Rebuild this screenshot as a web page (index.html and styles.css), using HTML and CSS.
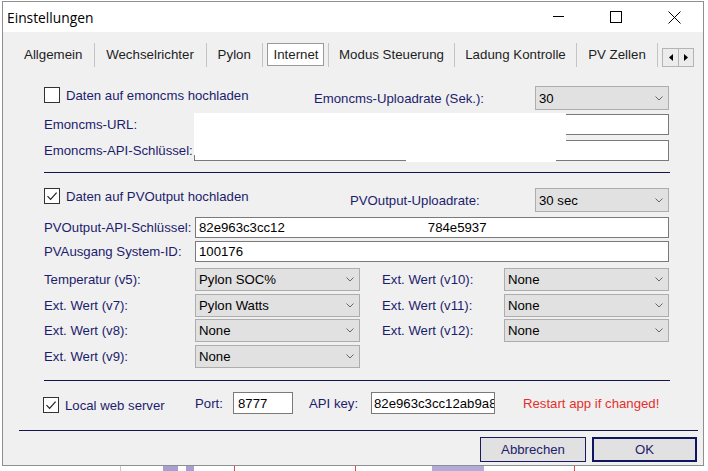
FILE: index.html
```html
<!DOCTYPE html>
<html lang="de">
<head>
<meta charset="utf-8">
<title>Einstellungen</title>
<link rel="stylesheet" href="styles.css">
</head>
<body>
<div class="dialog">
  <div class="titlebar">
    <span class="title">Einstellungen</span>
    <div class="controls">
      <span class="ctl ctl-min"><svg width="11" height="1" viewBox="0 0 11 1"><rect width="11" height="1" fill="#000"/></svg></span>
      <span class="ctl"><svg width="12" height="12" viewBox="0 0 12 12"><rect x="0.5" y="0.5" width="11" height="11" fill="none" stroke="#000"/></svg></span>
      <span class="ctl"><svg width="13" height="13" viewBox="0 0 13 13"><path d="M0.5 0.5L12.5 12.5M12.5 0.5L0.5 12.5" stroke="#000" stroke-width="1"/></svg></span>
    </div>
  </div>

  <div class="client">
    <div class="tabs">
      <span class="tab t1">Allgemein</span><i class="sep"></i>
      <span class="tab t2">Wechselrichter</span><i class="sep"></i>
      <span class="tab t3">Pylon</span><i class="sep"></i>
      <span class="tab t4 active"><span class="tabbox">Internet</span></span><i class="sep"></i>
      <span class="tab t5">Modus Steuerung</span><i class="sep"></i>
      <span class="tab t6">Ladung Kontrolle</span><i class="sep"></i>
      <span class="tab t7">PV Zellen</span><i class="sep"></i>
      <span class="scroller">
        <span class="arr"><svg width="4" height="7" viewBox="0 0 4 7"><path d="M4 0L0 3.5L4 7Z" fill="#000"/></svg></span>
        <span class="arr"><svg width="4" height="7" viewBox="0 0 4 7"><path d="M0 0L4 3.5L0 7Z" fill="#000"/></svg></span>
      </span>
    </div>

    <div class="page">
      <div class="sec1">
        <div class="row row-a">
          <label class="chkgrp w-a"><span class="chk"></span><span>Daten auf emoncms hochladen</span></label>
          <span class="lbl grow">Emoncms-Uploadrate (Sek.):</span>
          <div class="sel w-rate"><span>30</span><svg width="8" height="5" viewBox="0 0 8 5"><path d="M0.5 0.5L4 4L7.5 0.5" fill="none" stroke="#666"/></svg></div>
        </div>
        <div class="row row-b">
          <span class="lbl w-l1">Emoncms-URL:</span>
          <div class="field grow"></div>
        </div>
        <div class="row row-c">
          <span class="lbl w-l1">Emoncms-API-Schlüssel:</span>
          <div class="field grow"></div>
        </div>
        <div class="redact redact-a"></div>
        <div class="redact redact-b"></div>
      </div>

      <div class="rule"></div>

      <div class="row row-d">
        <label class="chkgrp w-d"><span class="chk on"><svg width="14" height="14" viewBox="0 0 14 14"><path d="M2.5 7.2L5.6 10.3L11.6 3.6" fill="none" stroke="#222" stroke-width="1.2"/></svg></span><span>Daten auf PVOutput hochladen</span></label>
        <span class="lbl grow">PVOutput-Uploadrate:</span>
        <div class="sel w-rate"><span>30 sec</span><svg width="8" height="5" viewBox="0 0 8 5"><path d="M0.5 0.5L4 4L7.5 0.5" fill="none" stroke="#666"/></svg></div>
      </div>
      <div class="row row-e">
        <span class="lbl w-l2">PVOutput-API-Schlüssel:</span>
        <div class="field grow"><span>82e963c3cc12</span><span class="key-tail">784e5937</span></div>
      </div>
      <div class="row row-f">
        <span class="lbl w-l2">PVAusgang System-ID:</span>
        <div class="field grow"><span>100176</span></div>
      </div>

      <div class="grid">
        <span class="lbl">Temperatur (v5):</span>
        <div class="sel"><span>Pylon SOC%</span><svg width="8" height="5" viewBox="0 0 8 5"><path d="M0.5 0.5L4 4L7.5 0.5" fill="none" stroke="#666"/></svg></div>
        <span></span>
        <span class="lbl">Ext. Wert (v10):</span>
        <div class="sel"><span>None</span><svg width="8" height="5" viewBox="0 0 8 5"><path d="M0.5 0.5L4 4L7.5 0.5" fill="none" stroke="#666"/></svg></div>

        <span class="lbl">Ext. Wert (v7):</span>
        <div class="sel"><span>Pylon Watts</span><svg width="8" height="5" viewBox="0 0 8 5"><path d="M0.5 0.5L4 4L7.5 0.5" fill="none" stroke="#666"/></svg></div>
        <span></span>
        <span class="lbl">Ext. Wert (v11):</span>
        <div class="sel"><span>None</span><svg width="8" height="5" viewBox="0 0 8 5"><path d="M0.5 0.5L4 4L7.5 0.5" fill="none" stroke="#666"/></svg></div>

        <span class="lbl">Ext. Wert (v8):</span>
        <div class="sel"><span>None</span><svg width="8" height="5" viewBox="0 0 8 5"><path d="M0.5 0.5L4 4L7.5 0.5" fill="none" stroke="#666"/></svg></div>
        <span></span>
        <span class="lbl">Ext. Wert (v12):</span>
        <div class="sel"><span>None</span><svg width="8" height="5" viewBox="0 0 8 5"><path d="M0.5 0.5L4 4L7.5 0.5" fill="none" stroke="#666"/></svg></div>

        <span class="lbl">Ext. Wert (v9):</span>
        <div class="sel"><span>None</span><svg width="8" height="5" viewBox="0 0 8 5"><path d="M0.5 0.5L4 4L7.5 0.5" fill="none" stroke="#666"/></svg></div>
      </div>

      <div class="rule rule-2"></div>

      <div class="row row-k">
        <label class="chkgrp w-k"><span class="chk on"><svg width="14" height="14" viewBox="0 0 14 14"><path d="M2.5 7.2L5.6 10.3L11.6 3.6" fill="none" stroke="#222" stroke-width="1.2"/></svg></span><span>Local web server</span></label>
        <span class="lbl w-port">Port:</span>
        <div class="field w-portin"><span>8777</span></div>
        <span class="lbl w-apik">API key:</span>
        <div class="field w-apiin"><span>82e963c3cc12ab9a8</span></div>
        <span class="warn">Restart app if changed!</span>
      </div>
    </div>

    <div class="rule rule-wide"></div>

    <div class="buttons">
      <button class="btn w-cancel">Abbrechen</button>
      <button class="btn btn-default w-ok">OK</button>
    </div>
  </div>
</div>
</body>
</html>
```

FILE: styles.css
```css
* { box-sizing: border-box; }

html, body { margin: 0; padding: 0; }

body {
  width: 708px;
  height: 471px;
  overflow: hidden;
  background-color: #ffffff;
  background-image:
    linear-gradient(to right, transparent 0 120px, #c8c8c8 120px 121px, transparent 121px 163px, #a89ed2 163px 178px, transparent 178px 186px, #a89ed2 186px 194px, transparent 194px 234px, #e04848 234px 235px, transparent 235px 355px, #e04848 355px 356px, transparent 356px 432px, #b3a9da 432px 484px, transparent 484px 574px, #e04848 574px 575px, transparent 575px);
  background-repeat: no-repeat;
  background-position: 0 466px;
  background-size: 708px 5px;
  font-family: "Liberation Sans", Arial, sans-serif;
  font-size: 13.2px;
  color: #1c1c6c;
}

.dialog {
  margin: 1px 0 0 2px;
  width: 702px;
  height: 465px;
  border: 1px solid #8f8f8f;
  background: #f0f0f0;
  display: flex;
  flex-direction: column;
}

/* title bar */
.titlebar {
  flex: none;
  height: 30px;
  background: #ffffff;
  display: flex;
  align-items: center;
}
.title {
  flex: 1;
  padding-left: 4px;
  font-family: "Open Sans", "Noto Sans", sans-serif;
  font-size: 13.8px;
  color: #000;
}
.controls { display: flex; height: 100%; }
.ctl {
  width: 58px;
  display: flex;
  align-items: center;
  justify-content: center;
}
.ctl svg { display: block; }
.ctl-min { padding-bottom: 2px; }

/* client */
.client { flex: 1; display: flex; flex-direction: column; }

.tabs {
  display: flex;
  align-items: flex-start;
  height: 24px;
  margin-top: 11px;
  padding-left: 10px;
  color: #1e1e1e;
  font-size: 13.3px;
}
.tab {
  height: 24px;
  line-height: 24px;
  text-align: center;
  white-space: nowrap;
}
.t1 { width: 80.5px; }
.t2 { width: 111px; }
.t3 { width: 55.5px; }
.t4 { width: 65px; }
.t5 { width: 125px; }
.t6 { width: 121px; }
.t7 { width: 80px; }
.tab.active { display: flex; justify-content: center; }
.tabbox {
  display: block;
  height: 23px;
  line-height: 22px;
  padding: 0 4px 0 5px;
  border: 1px solid #9a9a9a;
  background: #ffffff;
}
.sep {
  width: 1px;
  height: 24px;
  background: #c4c4c4;
}
.scroller {
  display: flex;
  margin: 5px 0 0 4px;
  height: 19px;
  border: 1px solid #b4b4b4;
}
.arr {
  width: 15px;
  display: flex;
  align-items: center;
  justify-content: center;
  background: #ececec;
}
.arr + .arr { border-left: 1px solid #b4b4b4; }
.arr svg { display: block; }

/* page */
.page {
  margin: 19px 0 0 41px;
  width: 625px;
}
.sec1 { position: relative; }

.row { display: flex; align-items: center; }
.grow { flex: 1; }
.lbl { white-space: nowrap; }

.row-a { height: 24px; }
.row-b { height: 21px; margin-top: 4px; }
.row-c { height: 21px; margin-top: 5px; }
.row-d { height: 24px; margin-top: 15px; }
.row-e { height: 21px; margin-top: 5px; }
.row-f { height: 21px; margin-top: 3px; }
.row-k { height: 22px; margin: 11px 0 0 -1px; }

.chkgrp {
  display: flex;
  align-items: center;
  gap: 6px;
  align-self: flex-start;
  height: 16px;
  white-space: nowrap;
}
.row-a .chkgrp { margin-top: 1px; }
.row-k .chkgrp { margin-top: 5px; }
.w-a { width: 270px; }
.w-d { width: 306px; }
.w-k { width: 152px; }

.chk {
  flex: none;
  width: 16px;
  height: 16px;
  border: 1px solid #333333;
  background: #ffffff;
}
.chk svg { display: block; }

.w-l1 { width: 150px; }
.w-l2 { width: 151px; }
.w-rate { width: 134px; }

.field {
  height: 100%;
  background: #ffffff;
  border: 1px solid #7a7a7a;
  padding-left: 3px;
  color: #000;
  display: flex;
  align-items: center;
  white-space: nowrap;
  overflow: hidden;
}
.key-tail { margin-left: 143px; }

.sel {
  height: 100%;
  background: #e1e1e1;
  border: 1px solid #adadad;
  color: #000;
  display: flex;
  align-items: center;
  justify-content: space-between;
  padding: 0 5px 0 3px;
}
.sel svg { display: block; flex: none; }

.redact {
  position: absolute;
  background: #ffffff;
}
.redact-a { left: 150px; top: 27px; width: 372px; height: 42px; }
.redact-b { left: 362px; top: 68px; width: 150px; height: 8px; }

.grid {
  margin-top: 6px;
  display: grid;
  grid-template-columns: 151px 165px 22px 122px 165px;
  grid-auto-rows: 23px;
  row-gap: 2.5px;
  align-items: center;
}
.grid .sel { height: 23px; }

.rule {
  height: 1px;
  width: 626px;
  background: #15154e;
  margin-top: 11px;
}
.rule-2 { margin-top: 12.5px; }
.rule-wide {
  width: 679px;
  margin: 16px 0 0 15.5px;
}

.w-port { width: 38px; }
.w-portin { width: 60px; padding-left: 4px; }
.w-apik { width: 62px; margin-left: 16px; }
.w-apiin { width: 124px; padding-left: 2px; }
.warn {
  margin-left: 28px;
  color: #e3302c;
  white-space: nowrap;
}

/* buttons */
.buttons {
  display: flex;
  justify-content: flex-end;
  gap: 6px;
  margin-top: 6px;
  padding-right: 6px;
  height: 25px;
}
.btn {
  height: 25px;
  font-family: "Liberation Sans", Arial, sans-serif;
  font-size: 13.2px;
  color: #1c1c6c;
  background: #e1e1e1;
  border: 1px solid #1a1a5e;
  padding: 0;
}
.btn-default { border: 2px solid #101560; }
.w-cancel { width: 106px; }
.w-ok { width: 105px; }
```
